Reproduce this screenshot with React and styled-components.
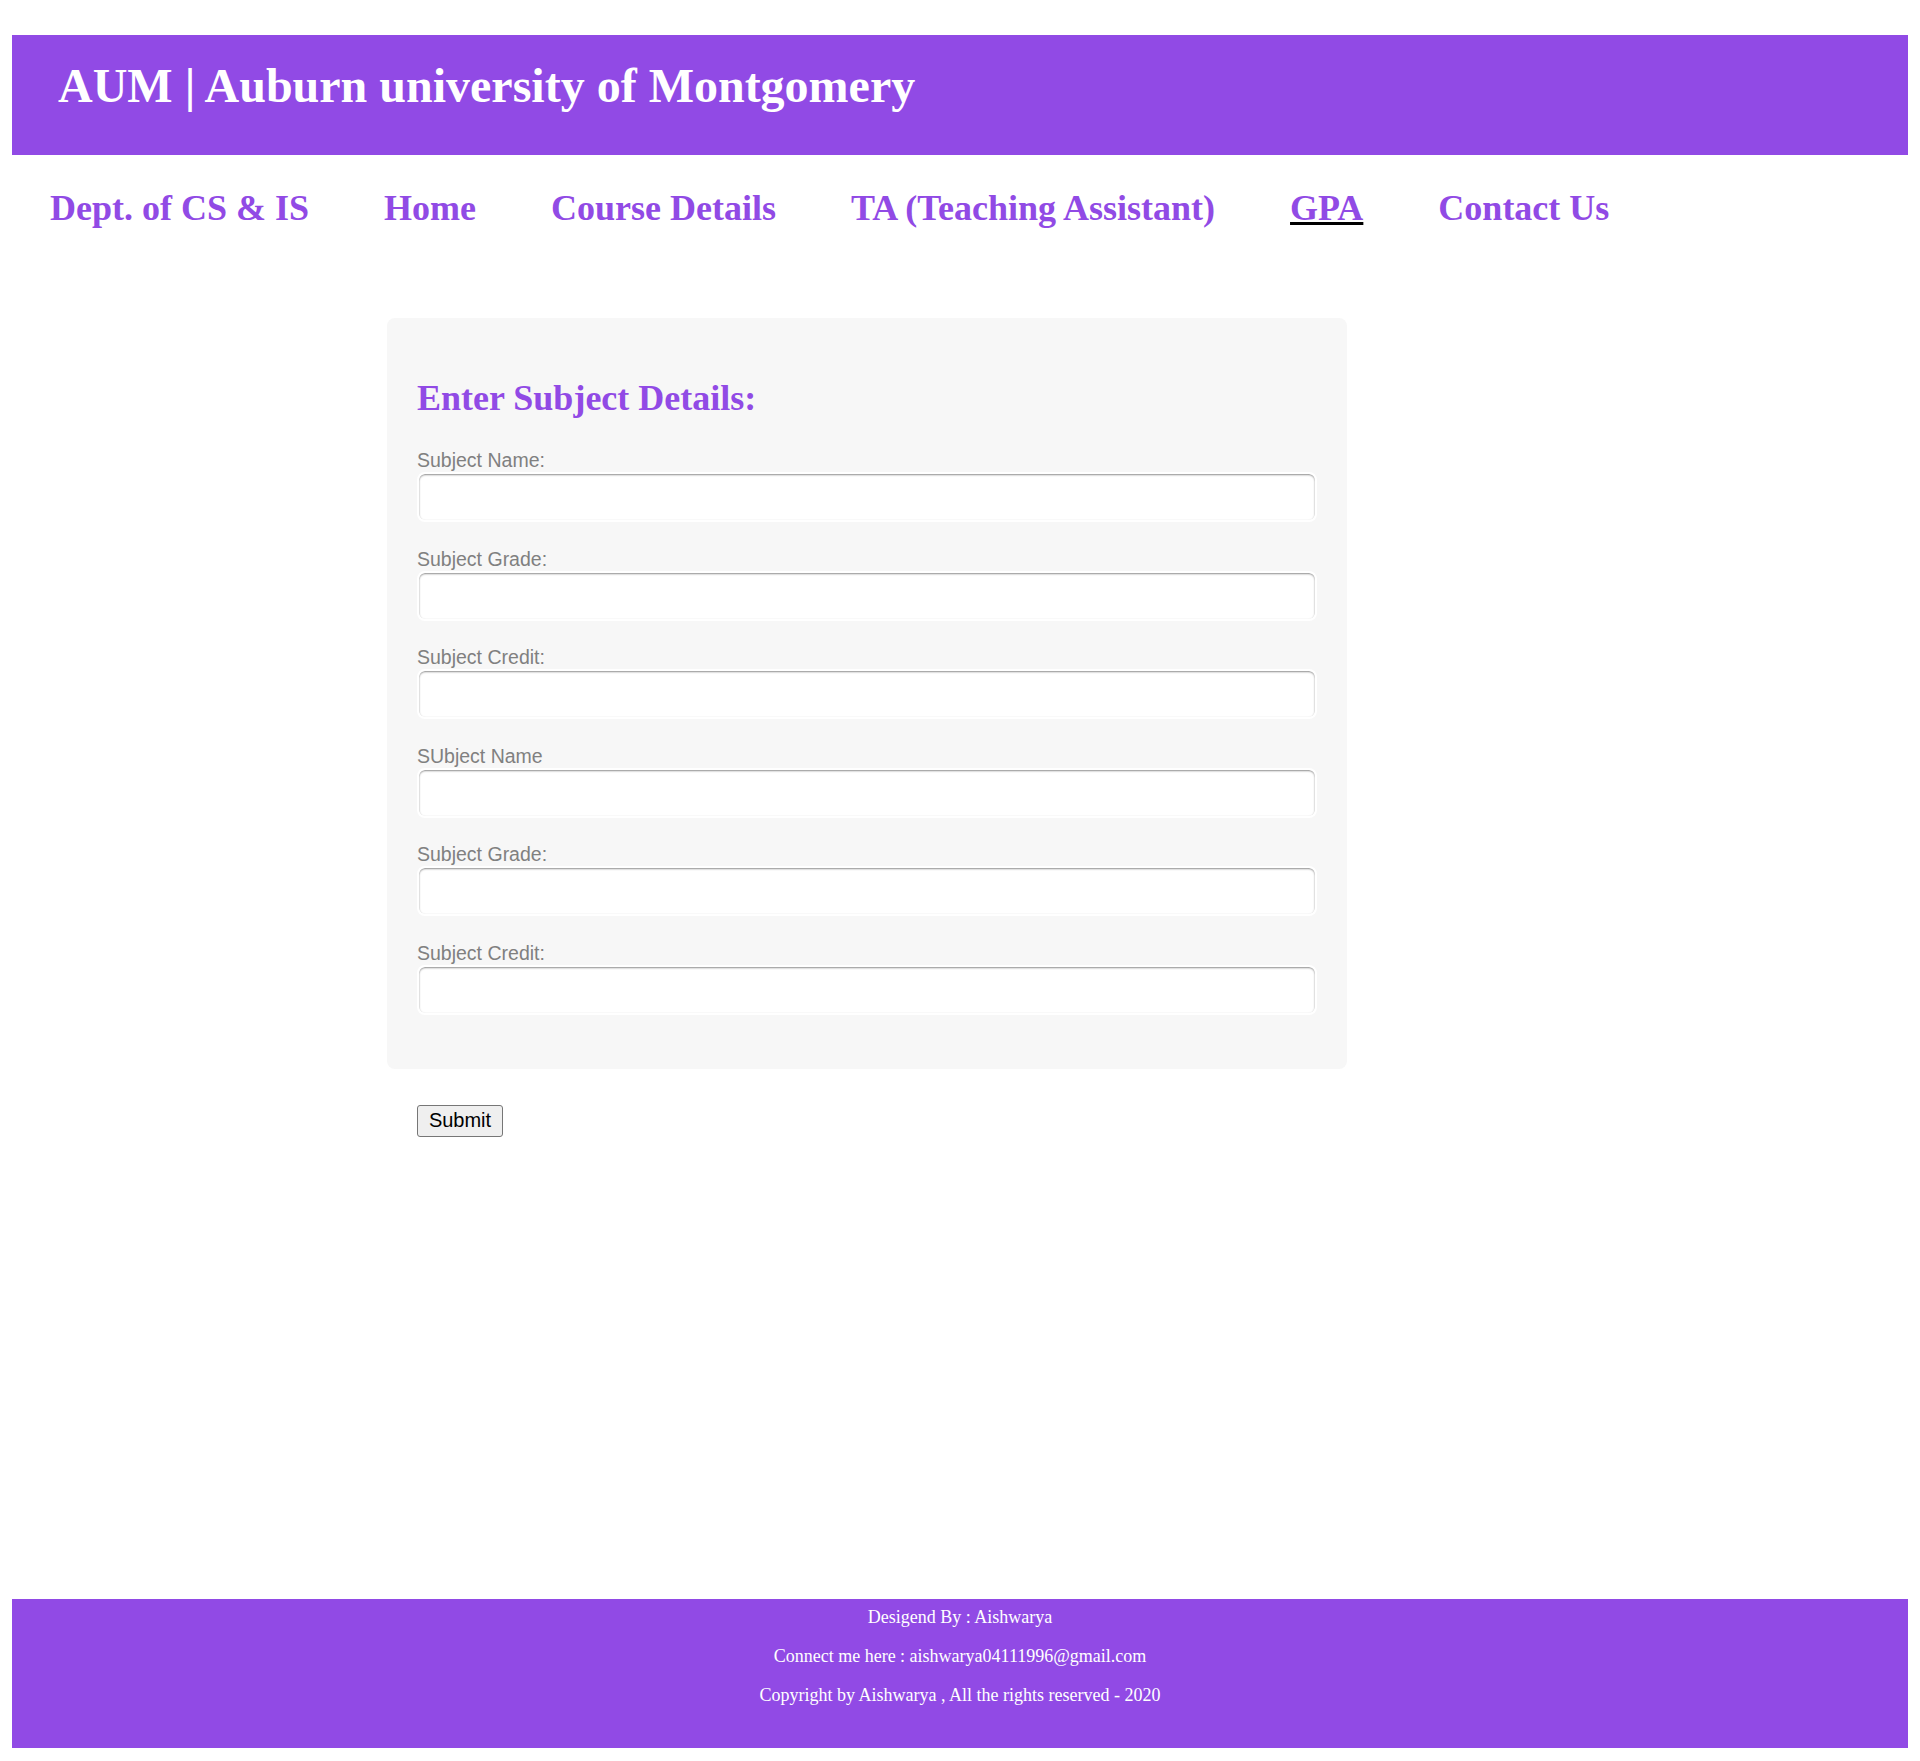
import React from "react";
import styled, { createGlobalStyle } from "styled-components";

const purple = "#914ae5";

const Global = createGlobalStyle`
  html, body { margin: 0; padding: 0; background: #fff; }
  body { font-family: "Liberation Serif", "Times New Roman", serif; }
`;

const Page = styled.div`
  padding: 35px 12px 13px;
`;

const Header = styled.header`
  background: ${purple};
  height: 120px;
  box-sizing: border-box;
  padding: 23px 0 0 46px;
`;

const Title = styled.h1`
  margin: 0;
  font-family: "Liberation Serif", "Times New Roman", serif;
  font-weight: 700;
  font-size: 48px;
  color: #fff;
`;

const Nav = styled.nav`
  display: flex;
  gap: 75px;
  padding: 32px 0 0 38px;
`;

const NavItem = styled.a`
  font-family: "Liberation Serif", "Times New Roman", serif;
  font-weight: 700;
  font-size: 36px;
  color: ${purple};
  text-decoration: ${(p) => (p.$active ? "underline" : "none")};
  text-decoration-color: #000;
  text-decoration-thickness: 3px;
  text-underline-offset: 2px;
  cursor: pointer;
`;

const Main = styled.main`
  padding: 89px 0 0 375px;
  height: 1370px;
  box-sizing: border-box;
`;

const Card = styled.form`
  width: 960px;
  box-sizing: border-box;
  background: #f7f7f7;
  border-radius: 8px;
  padding: 30px 30px 54px;
`;

const Heading = styled.h2`
  margin: 29px 0 30px;
  font-family: "Liberation Serif", "Times New Roman", serif;
  font-weight: 700;
  font-size: 36px;
  color: ${purple};
`;

const Fields = styled.div`
  display: flex;
  flex-direction: column;
  gap: 25.5px;
`;

const Field = styled.div`
  display: flex;
  flex-direction: column;
`;

const Label = styled.label`
  display: block;
  font-family: "Liberation Sans", Arial, sans-serif;
  font-size: 19.5px;
  line-height: 22px;
  color: #808080;
  margin-bottom: 1px;
`;

const Input = styled.input`
  width: 100%;
  height: 50px;
  box-sizing: border-box;
  background: #fff;
  border: 2px solid #fff;
  border-radius: 8px;
  box-shadow: inset 0 1px 2px rgba(0, 0, 0, 0.45);
  outline: none;
  font-size: 18px;
  padding: 0 10px;
`;

const SubmitButton = styled.button`
  margin: 36px 0 0 30px;
  width: 86px;
  height: 32px;
  box-sizing: border-box;
  font-family: "Liberation Sans", Arial, sans-serif;
  font-size: 20px;
  color: #000;
  background: #efefef;
  border: 1px solid #767676;
  border-radius: 3px;
  padding: 0;
`;

const Footer = styled.footer`
  background: ${purple};
  color: #fff;
  text-align: center;
  font-family: "Liberation Serif", "Times New Roman", serif;
  font-size: 18px;
  padding: 8px 0 42px;
  display: flex;
  flex-direction: column;
  gap: 18px;
`;

const FooterLine = styled.p`
  margin: 0;
`;

const navItems = [
  "Dept. of CS & IS",
  "Home",
  "Course Details",
  "TA (Teaching Assistant)",
  "GPA",
  "Contact Us",
];

const fields = [
  "Subject Name:",
  "Subject Grade:",
  "Subject Credit:",
  "SUbject Name",
  "Subject Grade:",
  "Subject Credit:",
];

export default function App() {
  return (
    <>
      <Global />
      <Page>
        <Header>
          <Title>AUM | Auburn university of Montgomery</Title>
        </Header>
        <Nav>
          {navItems.map((n) => (
            <NavItem key={n} $active={n === "GPA"}>
              {n}
            </NavItem>
          ))}
        </Nav>
        <Main>
          <Card onSubmit={(e) => e.preventDefault()}>
            <Heading>Enter Subject Details:</Heading>
            <Fields>
              {fields.map((f, i) => (
                <Field key={i}>
                  <Label htmlFor={`f${i}`}>{f}</Label>
                  <Input id={`f${i}`} type="text" />
                </Field>
              ))}
            </Fields>
          </Card>
          <SubmitButton type="button">Submit</SubmitButton>
        </Main>
        <Footer>
          <FooterLine>Desigend By : Aishwarya</FooterLine>
          <FooterLine>Connect me here : aishwarya04111996@gmail.com</FooterLine>
          <FooterLine>Copyright by Aishwarya , All the rights reserved - 2020</FooterLine>
        </Footer>
      </Page>
    </>
  );
}
